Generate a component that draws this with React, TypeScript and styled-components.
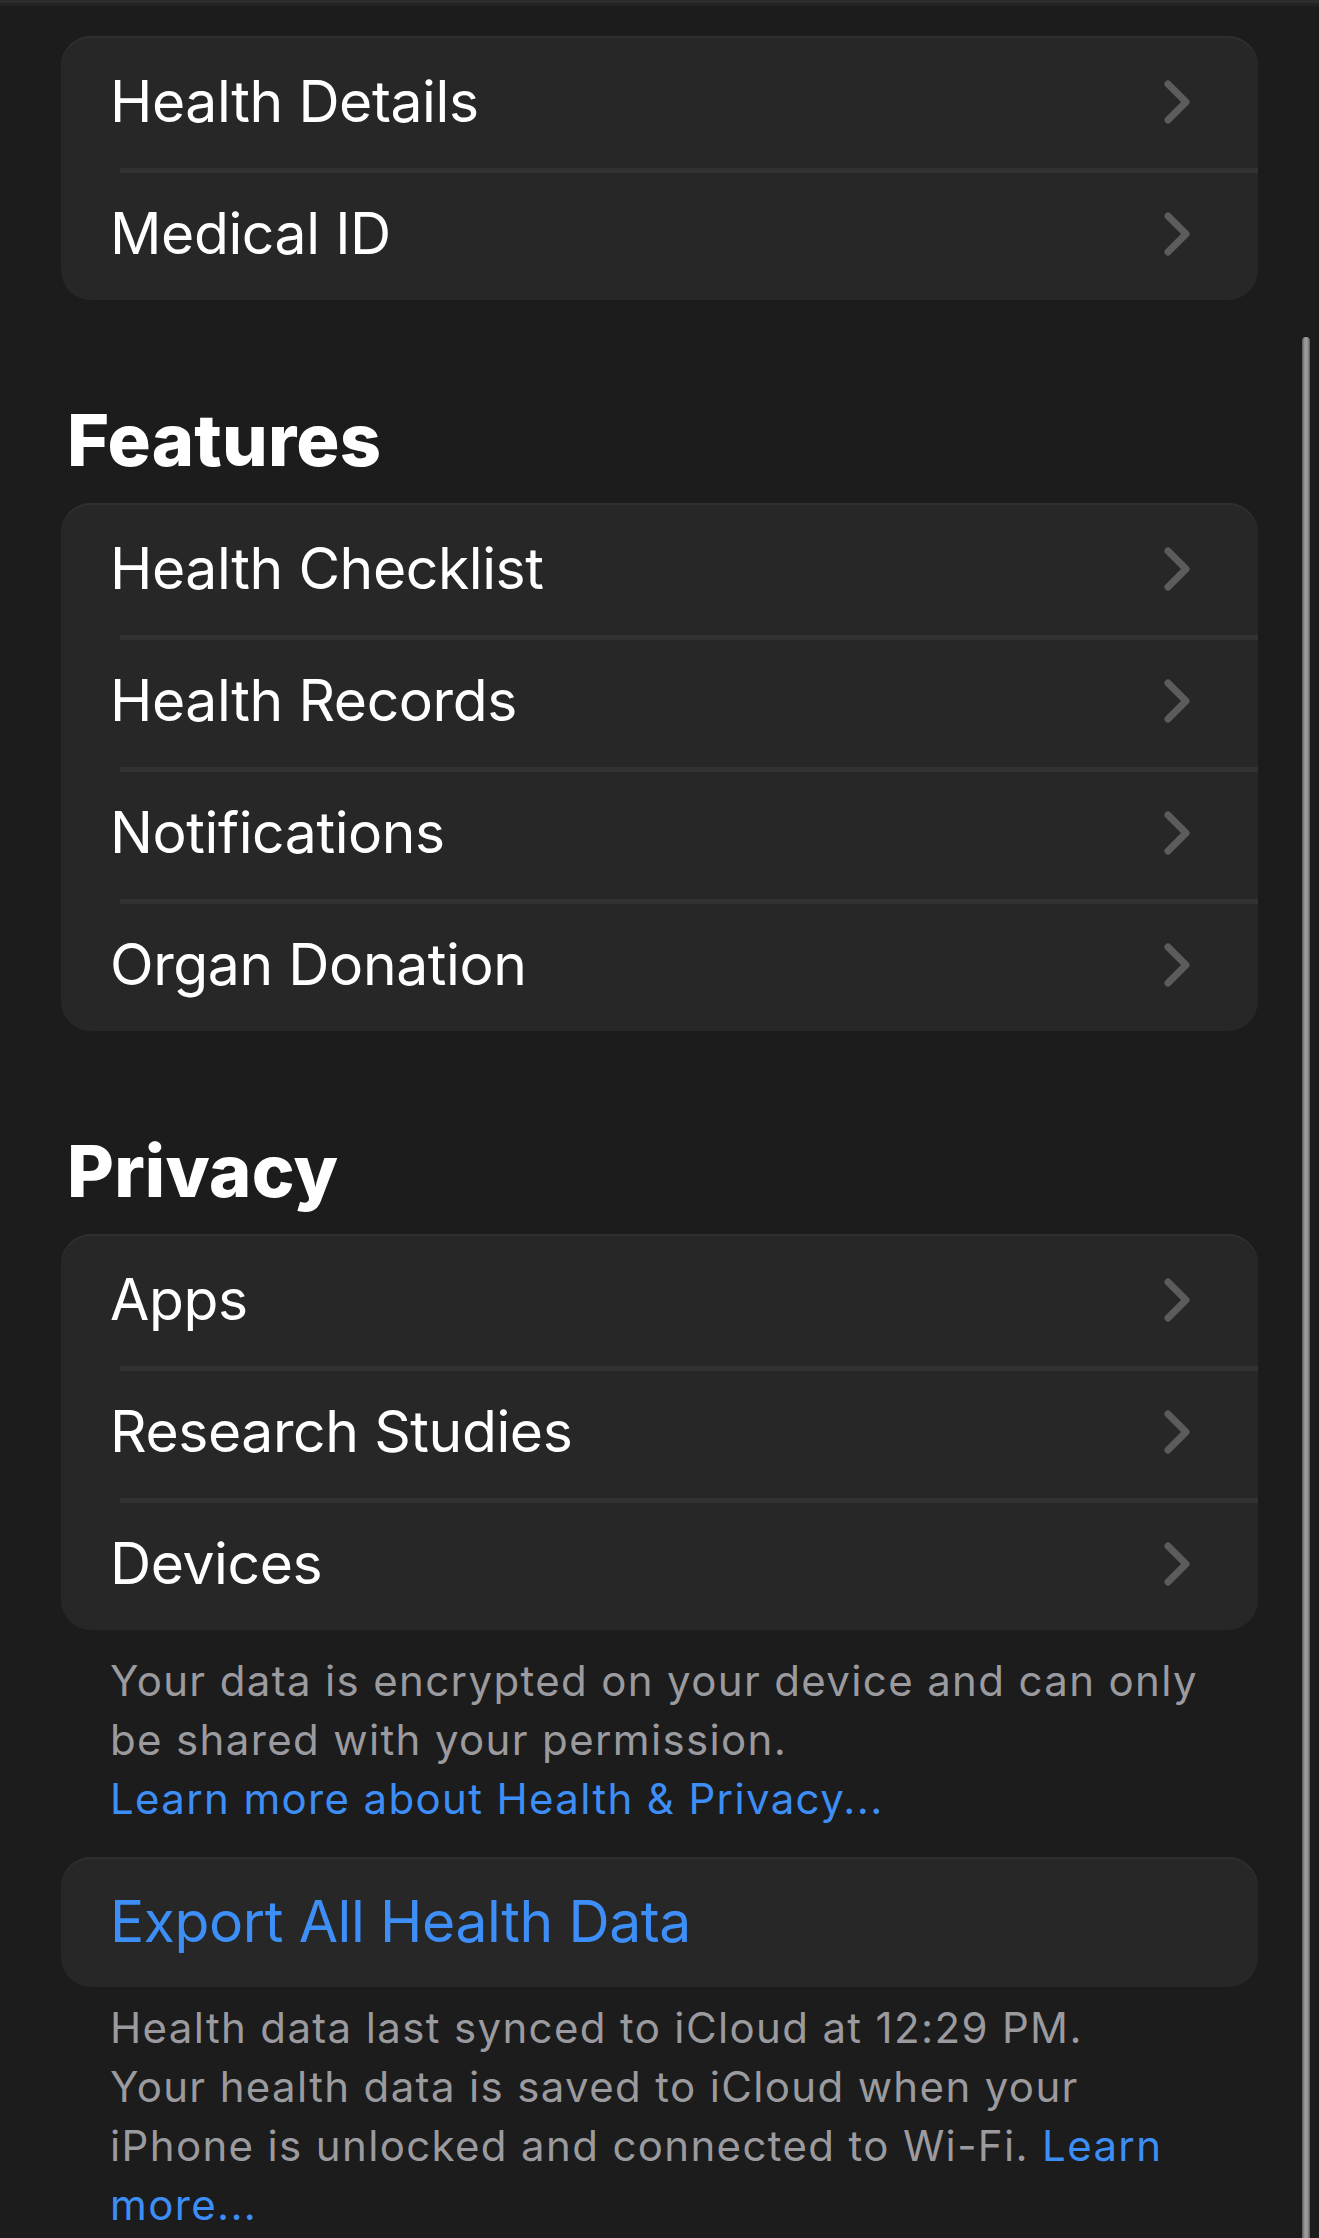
import React from "react";
import styled, { createGlobalStyle } from "styled-components";

const Global = createGlobalStyle`
  html, body {
    margin: 0;
    padding: 0;
    background: #1c1c1c;
  }
  body {
    font-family: Inter, "Noto Sans", "Liberation Sans", sans-serif;
    -webkit-font-smoothing: antialiased;
  }
`;

const Page = styled.div`
  position: relative;
  width: 1319px;
  min-height: 2238px;
  background: #1c1c1c;
  overflow: hidden;
`;

const TopEdge = styled.div`
  height: 6px;
  background: linear-gradient(to bottom, #2d2d2d 0 3px, #242424 3px 6px);
`;

const Content = styled.div`
  display: flex;
  flex-direction: column;
  padding: 30px 61px 0 61px;
`;

const Card = styled.div<{ $mt?: number }>`
  background: #272727;
  border-radius: 30px;
  overflow: hidden;
  margin-top: ${(p) => p.$mt ?? 0}px;
  box-shadow: inset 0 2px 0 #2f2f2f;
`;

const Row = styled.div<{ $h?: number }>`
  position: relative;
  height: ${(p) => p.$h ?? 132}px;
  display: flex;
  align-items: center;
  justify-content: space-between;
  padding: 0 65px 0 49px;
  & + &::before {
    content: "";
    position: absolute;
    top: 0;
    left: 59px;
    right: 0;
    height: 5px;
    background: #323232;
  }
`;

const RowLabel = styled.span<{ $blue?: boolean }>`
  font-size: 57px;
  font-weight: 400;
  letter-spacing: -0.4px;
  color: ${(p) => (p.$blue ? "#3e8ef7" : "#ffffff")};
  line-height: 1.21;
`;

const SectionTitle = styled.h2`
  margin: 97px 0 20px 6px;
  font-size: 72px;
  line-height: 86px;
  font-weight: 800;
  letter-spacing: 0.2px;
  color: #ffffff;
`;

const Footer = styled.p<{ $pt: number }>`
  margin: 0;
  padding: ${(p) => p.$pt}px 0 0 49px;
  font-size: 42px;
  line-height: 59px;
  color: #9a9a9f;
  letter-spacing: 1.35px;
  white-space: nowrap;
`;

const Link = styled.span`
  color: #3e8ef7;
`;

const ScrollThumb = styled.div`
  position: absolute;
  top: 337px;
  bottom: 0;
  left: 1302px;
  width: 8px;
  border-radius: 4px 4px 0 0;
  background: linear-gradient(to right, #5a5a5a, #9a9a9a 35%, #9a9a9a 65%, #5a5a5a);
`;

const Chevron = () => (
  <svg width="34" height="48" viewBox="0 0 34 48" fill="none">
    <polyline
      points="9,6 27,24 9,42"
      stroke="#5c5c5f"
      strokeWidth="7"
      strokeLinecap="round"
      strokeLinejoin="round"
    />
  </svg>
);

const NavRow = ({ label }: { label: string }) => (
  <Row>
    <RowLabel>{label}</RowLabel>
    <Chevron />
  </Row>
);

export default function App() {
  return (
    <Page>
      <Global />
      <TopEdge />
      <Content>
        <Card>
          <NavRow label="Health Details" />
          <NavRow label="Medical ID" />
        </Card>

        <SectionTitle>Features</SectionTitle>
        <Card>
          <NavRow label="Health Checklist" />
          <NavRow label="Health Records" />
          <NavRow label="Notifications" />
          <NavRow label="Organ Donation" />
        </Card>

        <SectionTitle>Privacy</SectionTitle>
        <Card>
          <NavRow label="Apps" />
          <NavRow label="Research Studies" />
          <NavRow label="Devices" />
        </Card>
        <Footer $pt={21}>
          Your data is encrypted on your device and can only
          <br />
          be shared with your permission.
          <br />
          <Link>Learn more about Health &amp; Privacy...</Link>
        </Footer>

        <Card $mt={29}>
          <Row $h={130}>
            <RowLabel $blue>Export All Health Data</RowLabel>
          </Row>
        </Card>
        <Footer $pt={11}>
          Health data last synced to iCloud at 12:29 PM.
          <br />
          Your health data is saved to iCloud when your
          <br />
          iPhone is unlocked and connected to Wi-Fi. <Link>Learn</Link>
          <br />
          <Link>more...</Link>
        </Footer>
      </Content>
      <ScrollThumb />
    </Page>
  );
}
